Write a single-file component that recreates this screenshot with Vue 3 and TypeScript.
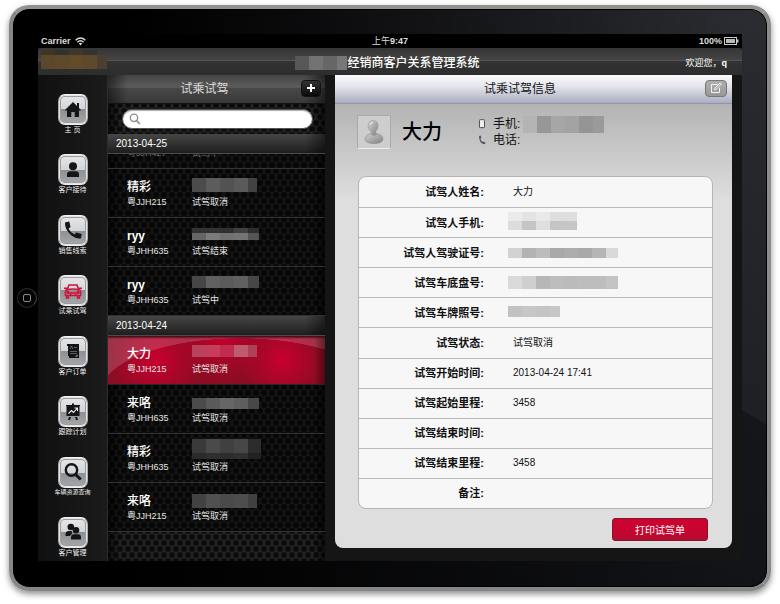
<script setup lang="ts">
import { ref } from 'vue'

interface Cell { x: number; y: number; w: number; h: number; fill: string }
interface Drive { id: number; name: string; plate: string; status: string; cells: Cell[]; latin?: boolean }
interface Field { label: string; value?: string; cells?: Cell[] }
interface NavItem { id: string; label: string; long?: boolean }

// Builds one strip of a masked value: cells of equal width, the last one cut at `width`.
function strip(y: number, h: number, width: number, fills: string[], step = 14, x = 0): Cell[] {
  return fills.map((fill, i) => ({
    x: x + i * step,
    y,
    w: i === fills.length - 1 ? width - i * step : step,
    h,
    fill,
  }))
}

const nav: NavItem[] = [
  { id: 'home', label: '主 页' },
  { id: 'reception', label: '客户接待' },
  { id: 'leads', label: '销售线索' },
  { id: 'drive', label: '试乘试驾' },
  { id: 'orders', label: '客户订单' },
  { id: 'plan', label: '跟踪计划' },
  { id: 'stock', label: '车辆资源查询', long: true },
  { id: 'customers', label: '客户管理' },
]

const earlier = { plate: '粤JJH427', status: '试驾中' }

const groups: { date: string; drives: Drive[] }[] = [
  {
    date: '2013-04-25',
    drives: [
      { id: 1, name: '精彩', plate: '粤JJH215', status: '试驾取消', cells: strip(9, 14, 65, ['#4b4b4b', '#5c5c5c', '#525252', '#5a5a5a', '#424242']) },
      { id: 2, name: 'ryy', latin: true, plate: '粤JHH635', status: '试驾结束', cells: [
        ...strip(10, 5, 67, ['#333', '#333', '#303030', '#404040', '#2d2d2d']),
        ...strip(15, 7, 67, ['#666', '#7b7b7b', '#717171', '#747474', '#555']),
      ] },
      { id: 3, name: 'ryy', latin: true, plate: '粤JHH635', status: '试驾中', cells: strip(9, 12, 67, ['#464646', '#606060', '#5b5b5b', '#606060', '#474747']) },
    ],
  },
  {
    date: '2013-04-24',
    drives: [
      { id: 4, name: '大力', plate: '粤JJH215', status: '试驾取消', cells: strip(9, 12, 65, ['#b8415d', '#c63d5c', '#bf2c4c', '#bd5b70', '#ae4057']) },
      { id: 5, name: '来咯', plate: '粤JHH635', status: '试驾取消', cells: strip(13, 11, 67, ['#4b4b4b', '#5a5a5a', '#666', '#5e5e5e', '#484848']) },
      { id: 6, name: '精彩', plate: '粤JHH635', status: '试驾取消', cells: [
        ...strip(5, 14, 69, ['#3a3a3a', '#4a4a4a', '#404040', '#474747', '#2c2c2c']),
        ...strip(19, 6, 69, ['#2b2b2b', '#2f2f2f', '#2d2d2d', '#303030', '#222']),
      ] },
      { id: 7, name: '来咯', plate: '粤JJH215', status: '试驾取消', cells: strip(11, 14, 65, ['#424242', '#505050', '#4a4a4a', '#4d4d4d', '#404040']) },
    ],
  },
]

const fields: Field[] = [
  { label: '试驾人姓名', value: '大力' },
  { label: '试驾人手机', cells: [
    ...strip(3, 9, 69, ['#ebebeb', '#e3e3e3', '#e9e9e9', '#dedede', '#dedede']),
    ...strip(12, 9, 69, ['#dcdcdc', '#c5c5c5', '#dfdfdf', '#c5c5c5', '#c6c6c6']),
  ] },
  { label: '试驾人驾驶证号', cells: strip(9, 10, 110, ['#d2d2d2', '#b3b3b3', '#bcbcbc', '#a9a9a9', '#adadad', '#a9a9a9', '#b5b5b5', '#d9d9d9']) },
  { label: '试驾车底盘号', cells: strip(7, 13, 110, ['#dadada', '#cfcfcf', '#b7b7b7', '#bdbdbd', '#bbb', '#bdbdbd', '#bdbdbd', '#c3c3c3']) },
  { label: '试驾车牌照号', cells: strip(7, 11, 52, ['#c2c2c2', '#c7c7c7', '#c4c4c4', '#c7c7c7']) },
  { label: '试驾状态', value: '试驾取消' },
  { label: '试驾开始时间', value: '2013-04-24 17:41' },
  { label: '试驾起始里程', value: '3458' },
  { label: '试驾结束时间' },
  { label: '试驾结束里程', value: '3458' },
  { label: '备注' },
]

const logoCells: Cell[] = [
  ...strip(0, 5, 56, ['#413522', '#33312d', '#40372a', '#353330']),
  ...strip(5, 14, 66, ['#5b482c', '#5e4a2b', '#624b28', '#5d492b', '#4b4030']),
]
const brandCells = strip(0, 14, 53, ['#575757', '#727272', '#666', '#777'])
const phoneCells = strip(0, 17, 81, ['#b4b4b4', '#979797', '#a6a6a6', '#a3a3a3', '#959595', '#9a9a9a'])

const active = ref('drive')
const selected = ref(4)
const query = ref('')
</script>

<template>
  <div class="page">
    <div class="device">
      <button class="home-key" type="button" aria-label="Home"><i></i></button>
      <div class="screen">
        <div class="status">
          <span class="carrier">Carrier
            <svg width="11" height="9" viewBox="0 0 11 9" fill="none" stroke="#ddd" stroke-width="1.4">
              <path d="M.6 3.2Q5.5-1 10.4 3.2M2.3 5.2Q5.500 2.500 8.700 5.200" />
              <path d="M3.800 6.400Q5.500 5 7.200 6.400L5.500 8.500Z" fill="#ddd" stroke="none" />
            </svg>
          </span>
          <span class="time">上午<b>9:47</b></span>
          <span class="power">100%
            <svg width="15" height="8" viewBox="0 0 15 8">
              <rect x=".5" y=".5" width="12" height="7" fill="none" stroke="#ccc" />
              <rect x="2" y="2" width="9" height="4" fill="#bbb" />
              <rect x="13" y="2.500" width="1.500" height="3" fill="#ccc" />
            </svg>
          </span>
        </div>

        <header class="topbar">
          <svg class="logo" width="66" height="19" shape-rendering="crispEdges">
            <rect v-for="(c, i) in logoCells" :key="i" :x="c.x" :y="c.y" :width="c.w" :height="c.h" :fill="c.fill" />
          </svg>
          <h1>
            <svg width="52" height="14" shape-rendering="crispEdges">
              <rect v-for="(c, i) in brandCells" :key="i" :x="c.x" :y="c.y" :width="c.w" :height="c.h" :fill="c.fill" />
            </svg>经销商客户关系管理系统
          </h1>
          <p class="welcome">欢迎您，<b>q</b></p>
        </header>

        <div class="body">
          <nav class="rail">
            <a v-for="item in nav" :key="item.id" :href="'#' + item.id" :class="{ on: active === item.id }" @click.prevent="active = item.id">
              <span class="tile">
                <svg width="20" height="20" viewBox="0 0 20 20" fill="currentColor">
                  <path v-if="item.id === 'home'" d="M10 2 1.500 10.500H4V17H8.300V12H11.700V17H16V10.500H18.500L16 8V3H14V6Z" />
                  <template v-else-if="item.id === 'reception'">
                    <circle cx="10" cy="6.200" r="4" />
                    <path d="M4 17V14.500Q4 11.300 7.500 11.300H12.500Q16 11.300 16 14.500V17Z" />
                  </template>
                  <path v-else-if="item.id === 'leads'" d="M2 2.500 6.300 1.500 7.500 7 5.500 8.700Q7.500 12.800 11.500 14.500L13.300 12.500 18.700 14 18 18.300Q14 19.500 8.500 15.500 1.500 9.500 2 2.500Z" />
                  <g v-else-if="item.id === 'drive'" fill="none" stroke="currentColor" stroke-width="1.500">
                    <path d="M4.500 8 6 4H14L15.500 8M3 9Q10 7 17 9Q18.500 11.500 17.500 14.500H2.500Q1.500 11.500 3 9ZM3.500 15V17H5.500V15M14.500 15V17H16.500V15M1 7.200H4M16 7.200H19M7.500 14V12H12.500V14" />
                    <circle cx="5" cy="11.500" r="1" /><circle cx="15" cy="11.500" r="1" />
                  </g>
                  <template v-else-if="item.id === 'orders'">
                    <path d="M4 3H16V17H6V15H5V5H4Z" />
                    <path d="M7 8 8.500 5 10 8M11 6.500H14M7 10.500H14M7 12.500H14" fill="none" stroke="#8f9193" stroke-width=".6" />
                    <path d="M12 15.500H14.500V13.500Z" fill="#b9bbbd" />
                  </template>
                  <template v-else-if="item.id === 'plan'">
                    <path d="M9 1.500H11V3H17V4H16.500V14H3.500V4H3V3H9ZM6 15H8L7 18H5ZM12 15H14L15 18H13Z" />
                    <path d="M5.500 11.500 8.500 8.500 10.500 10.500 14 6.500M11.500 6H14.500V9" fill="none" stroke="#eee" stroke-width="1.100" />
                  </template>
                  <template v-else-if="item.id === 'stock'">
                    <circle cx="8.500" cy="8" r="5.700" fill="none" stroke="currentColor" stroke-width="2.400" />
                    <path d="M12.500 12.500 17.800 17.500" stroke="currentColor" stroke-width="3" />
                  </template>
                  <template v-else>
                    <circle cx="7.800" cy="5" r="3.300" />
                    <path d="M2.500 14V12Q2.500 9.300 5 9H9.500Q8 10.500 9 12Q7 13 7 14Z" />
                    <circle cx="13" cy="8.300" r="3.300" />
                    <path d="M8 17.500V15.500Q8 12.300 11 12.300H15Q18 12.300 18 15.500V17.500Z" />
                  </template>
                </svg>
              </span>
              <span class="caption" :class="{ long: item.long }">{{ item.label }}</span>
            </a>
          </nav>

          <section class="list">
            <div class="list-head">
              <h2>试乘试驾</h2>
              <button class="add" type="button" aria-label="新增">
                <svg width="8" height="8" viewBox="0 0 8 8"><path d="M4 0V8M0 4H8" stroke="#fff" stroke-width="2" /></svg>
              </button>
            </div>
            <div class="search">
              <label>
                <svg width="12" height="12" viewBox="0 0 12 12" fill="none" stroke="#8a8d92">
                  <circle cx="5" cy="4.800" r="3.700" stroke-width="1.300" /><path d="M7.700 7.700 10.800 11" stroke-width="1.700" />
                </svg>
                <input v-model="query" type="search" aria-label="搜索" />
              </label>
            </div>
            <div v-for="(group, g) in groups" :key="group.date">
              <h3>{{ group.date }}</h3>
              <div v-if="g === 0" class="scrolled">
                <span class="sub">{{ earlier.plate }}</span><span class="sub">{{ earlier.status }}</span>
              </div>
              <button v-for="d in group.drives" :key="d.id" class="drive" :class="{ selected: selected === d.id }" type="button" @click="selected = d.id">
                <span class="name" :class="{ latin: d.latin }">{{ d.name }}</span>
                <svg width="70" height="26" shape-rendering="crispEdges">
                  <rect v-for="(c, i) in d.cells" :key="i" :x="c.x" :y="c.y" :width="c.w" :height="c.h" :fill="c.fill" />
                </svg>
                <span class="sub">{{ d.plate }}</span>
                <span class="sub">{{ d.status }}</span>
              </button>
            </div>
          </section>

          <main class="detail">
            <div class="detail-head">
              <h2>试乘试驾信息</h2>
              <button class="edit" type="button" aria-label="编辑">
                <svg width="12" height="12" viewBox="0 0 12 12" fill="none" stroke="#f2f2f2">
                  <path d="M7.500 2.500H1.500V10.500H9.500V6M4.500 7.800 5 6 10 1 11.300 2.200 6.300 7.300Z" />
                </svg>
              </button>
            </div>
            <div class="profile">
              <div class="avatar">
                <svg width="24" height="26" viewBox="0 0 24 26">
                  <defs>
                    <linearGradient id="figure" x1="0" y1="0" x2="1" y2="1">
                      <stop offset="0" stop-color="#d2d2d2" /><stop offset="1" stop-color="#808080" />
                    </linearGradient>
                  </defs>
                  <path d="M9 14.500Q4 15 3 19.500Q3 24.500 12 24.500Q21 24.500 21 19.500Q20 15.500 14.500 14.500Z" fill="url(#figure)" stroke="#8c8c8c" stroke-width=".6" />
                  <path d="M6 6.500Q6.500 1.500 11.500 1.500Q16.500 2 16 7.500Q15.500 10.500 13.700 12.500L14.500 15.500Q12 17.500 9.500 15.500L9 12.500Q6 10.500 6 6.500Z" fill="url(#figure)" stroke="#999" stroke-width=".6" />
                  <path d="M8 6Q8.500 3.500 11 3.300" fill="none" stroke="#eee" />
                </svg>
              </div>
              <strong>大力</strong>
              <dl>
                <div>
                  <svg width="8" height="10" viewBox="0 0 8 10"><rect x="1.500" y=".7" width="5" height="8" rx=".6" fill="#eee" stroke="#555" /><path d="M3 8.500H5" stroke="#555" /></svg>
                  <dt>手机:</dt>
                  <dd>
                    <svg width="81" height="17" shape-rendering="crispEdges">
                      <rect v-for="(c, i) in phoneCells" :key="i" :x="c.x" :y="c.y" :width="c.w" :height="c.h" :fill="c.fill" />
                    </svg>
                  </dd>
                </div>
                <div>
                  <svg width="8" height="10" viewBox="0 0 8 10"><path d="M1 1 2.700.5 3.300 3 2.400 3.800Q3 6 4.900 7.100L5.900 6.400 7.600 8 6.500 9.300Q1 8.500 1 1Z" fill="#555" /></svg>
                  <dt>电话:</dt>
                  <dd></dd>
                </div>
              </dl>
            </div>
            <table class="card">
              <tbody>
                <tr v-for="f in fields" :key="f.label">
                  <th scope="row">{{ f.label }}:</th>
                  <td>
                    <svg v-if="f.cells" width="110" height="28" shape-rendering="crispEdges">
                      <rect v-for="(c, i) in f.cells" :key="i" :x="c.x" :y="c.y" :width="c.w" :height="c.h" :fill="c.fill" />
                    </svg>
                    <template v-else>{{ f.value }}</template>
                  </td>
                </tr>
              </tbody>
            </table>
            <button class="print" type="button">打印试驾单</button>
          </main>
        </div>
      </div>
    </div>
  </div>
</template>

<style>
body { margin: 0; background: #fff; }
</style>

<style scoped>
* { box-sizing: border-box; }
h1, h2, h3, p, dl, dd { margin: 0; font-weight: 400; }
button { margin: 0; padding: 0; border: 0; font: inherit; color: inherit; cursor: pointer; }
svg { display: block; flex: none; }

.page {
  display: flex;
  min-height: 100vh;
  padding: 5px 9px 13px;
  font-family: "Liberation Sans", "Noto Sans CJK SC", sans-serif;
  font-size: 10px;
  color: #fff;
}
.device {
  position: relative;
  display: flex;
  flex: 1;
  padding: 25px 25px 26px;
  border: 4px solid;
  border-color: #92938f #8b8c8c #858686 #858686;
  border-radius: 20px;
  background:
    linear-gradient(90deg, #000 15%, transparent 95%),
    linear-gradient(210deg, #2b2c31 0, #1f2025 41%, #15161a 41%, #0c0d10 100%);
  background-clip: padding-box;
  box-shadow: 0 3px 6px rgba(0, 0, 0, .45), inset 0 0 0 1px #000;
}
.home-key {
  position: absolute;
  left: 4px;
  top: 50%;
  display: grid;
  place-items: center;
  width: 20px;
  height: 20px;
  margin-top: -10px;
  border: 1px solid #2c2c2c;
  border-right-color: #444;
  border-radius: 50%;
  background: #050505;
}
.home-key i { width: 8px; height: 8px; border: 1px solid #8a8a8a; border-radius: 2px; }
.screen { display: flex; flex: 1; flex-direction: column; min-width: 0; background: #151515; }

.status {
  display: grid;
  grid-template-columns: 1fr auto 1fr;
  align-items: center;
  height: 14px;
  padding: 0 3px;
  background: #000;
  color: #ddd;
  font-size: 9px;
  font-weight: 700;
  line-height: 14px;
}
.carrier, .power { display: flex; align-items: center; gap: 4px; }
.power { justify-content: flex-end; gap: 2px; }
.time { font-weight: 400; }

.topbar {
  display: grid;
  grid-template-columns: 1fr auto 1fr;
  align-items: center;
  height: 27px;
  padding: 0 12px 0 3px;
  border-radius: 3px 3px 0 0;
  background: linear-gradient(#363636, #444 12px, #555 12px, #555 13px, #333 13px, #2d2d2d);
}
.logo { align-self: start; margin-top: 2px; }
h1 { display: flex; align-items: center; padding: 2px 0 0 4px; font-size: 12px; font-weight: 500; line-height: 16px; }
.welcome { padding: 2px 3px 0 0; font-size: 9px; text-align: right; }

.body { display: flex; flex: 1; min-height: 0; }
.rail {
  display: flex;
  flex-direction: column;
  justify-content: space-between;
  width: 70px;
  padding: 19px 0 4px;
  border-right: 1px solid #2c2c2c;
  background: linear-gradient(90deg, #101010, #1b1b1b);
}
.rail a { display: flex; flex-direction: column; align-items: center; color: #151515; text-decoration: none; }
.rail a.on { color: #d1103c; }
.tile {
  display: grid;
  place-items: center;
  width: 30px;
  height: 31px;
  border: 1px solid;
  border-color: #f4f4f4 #aaa #eee;
  border-radius: 7px;
  background: linear-gradient(#e6e8ea, #d3d5d8 50%, #8d9093 50%, #a6a8aa);
  box-shadow: inset 0 0 0 1px #e4e4e4, inset 0 0 0 2px #9a9d9f;
}
.caption { color: #eee; font-size: 7px; line-height: 9px; white-space: nowrap; }
.caption.long { font-size: 6px; }

.list {
  flex: 217;
  min-width: 0;
  background:
    linear-gradient(90deg, rgba(0, 0, 0, .6), transparent 12px, transparent calc(100% - 12px), rgba(0, 0, 0, .6)),
    radial-gradient(circle at 50% 50%, #0a0a0a 2px, transparent 4px) 0 0 / 8px 12px,
    radial-gradient(circle at 50% 50%, #0a0a0a 2px, transparent 4px) 4px 6px / 8px 12px,
    #282828;
}
.list-head {
  display: flex;
  align-items: center;
  height: 29px;
  padding-right: 4px;
  background:
    linear-gradient(90deg, rgba(0, 0, 0, .5), transparent 20px, transparent calc(100% - 20px), rgba(0, 0, 0, .5)),
    linear-gradient(#444, #5c5c5c 12px, #6a6a6a 12px, #484848 13px, #393939);
  border-bottom: 1px solid #111;
}
h2 { flex: 1; font-size: 12px; line-height: 18px; text-align: center; }
.list-head h2 { color: #ddd; }
.add {
  display: grid;
  place-items: center;
  width: 20px;
  height: 17px;
  margin-bottom: 2px;
  border: 1px solid #111;
  border-radius: 4px;
  background: linear-gradient(#333, #0a0a0a);
}
.search { height: 30px; padding: 5px 12px 5px 14px; }
.search label {
  display: flex;
  align-items: center;
  height: 20px;
  padding: 0 8px 0 6px;
  border: 1px solid #555;
  border-radius: 10px;
  background: #fff;
  box-shadow: inset 0 1px 1px #aaa;
}
.search input { flex: 1; min-width: 0; height: 16px; padding: 0 4px; border: 0; outline: 0; background: none; font: inherit; }
h3 {
  height: 20px;
  padding-left: 8px;
  border-bottom: 1px solid #4b4b4b;
  background:
    linear-gradient(90deg, transparent calc(100% - 20px), rgba(0, 0, 0, .5)),
    linear-gradient(#464646, #1e1e1e);
  font-size: 10px;
  line-height: 20px;
}
.scrolled, .drive { display: grid; grid-template-columns: 65px 1fr; padding-left: 19px; background: rgba(0, 0, 0, .4); }
.scrolled {
  align-content: end;
  height: 15px;
  padding-bottom: 8px;
  border-bottom: 1px solid #333;
  overflow: hidden;
  color: #666;
}
.drive {
  grid-template-rows: 26px 14px;
  width: 100%;
  height: 49px;
  align-content: start;
  border-bottom: 1px solid #333;
  text-align: left;
}
.name { align-self: end; font-size: 12px; font-weight: 500; line-height: 16px; }
.name.latin { font-weight: 700; }
.sub { font-size: 9px; line-height: 14px; }
.drive .sub { color: #e4e4e4; }
.drive.selected {
  border-bottom-color: #1d2b26;
  background:
    linear-gradient(#3a0711, transparent 3px),
    linear-gradient(90deg, transparent 95%, rgba(0, 0, 0, .4)),
    radial-gradient(140px 55px at 132px 57px, transparent 99%, rgba(255, 255, 255, .16) 100%),
    radial-gradient(circle at 174px 50%, #c8002f 0, transparent 42px),
    radial-gradient(circle at 48px 50%, #c8002f 0, transparent 46px),
    radial-gradient(circle at 115px 0, #c1002d 0, transparent 46px),
    #8b0c23;
}

.detail {
  display: flex;
  flex: 397;
  flex-direction: column;
  min-width: 0;
  margin: 0 10px 13px;
  overflow: hidden;
  border-radius: 0 0 8px 8px;
  background: linear-gradient(#b3b3b3 28px, #dedede 125px);
  color: #111;
}
.detail-head {
  display: flex;
  align-items: center;
  height: 29px;
  padding-right: 5px;
  border-bottom: 1px solid #9296ab;
  background: linear-gradient(#fbfbfd, #e4e5ec 40%, #a9adc0);
}
.edit {
  display: grid;
  place-items: center;
  width: 22px;
  height: 17px;
  margin-bottom: 2px;
  border: 1px solid #777;
  border-radius: 4px;
  background: linear-gradient(#b0b0b0, #989898);
}
.profile { display: flex; align-items: center; height: 72px; padding: 0 0 16px 22px; }
.avatar {
  display: grid;
  place-items: center;
  width: 34px;
  height: 34px;
  border: 1px solid #aaa;
  border-bottom-color: #eee;
  border-radius: 2px;
  background: #cecece;
}
.profile strong { width: 75px; padding-left: 11px; color: #000; font-size: 20px; font-weight: 500; line-height: 28px; }
dl div { display: flex; align-items: center; gap: 7px; height: 16px; padding-left: 12px; }
dt { width: 23px; font-size: 12px; line-height: 16px; white-space: nowrap; }

.card {
  display: flex;
  flex: 1;
  margin: 0 19px 9px 23px;
  border: 1px solid #b5b5b5;
  border-radius: 8px;
  background: #f7f7f7;
  overflow: hidden;
}
tbody { display: grid; flex: 1; grid-auto-rows: 1fr; }
tr { display: grid; grid-template-columns: 125px 1fr; align-items: center; }
tr + tr { border-top: 1px solid #b9b9b9; }
th { padding: 0; font-size: 11px; font-weight: 700; line-height: 16px; text-align: right; white-space: nowrap; }
td { padding: 0 0 0 29px; font-size: 10px; line-height: 16px; }
td svg { margin-left: -5px; }
.print {
  align-self: flex-end;
  width: 96px;
  height: 23px;
  margin: 0 24px 7px 0;
  border: 1px solid #83142b;
  border-radius: 3px;
  background: linear-gradient(#cb0330 50%, #b10e30);
  color: #fff;
  font-size: 10px;
}
</style>
